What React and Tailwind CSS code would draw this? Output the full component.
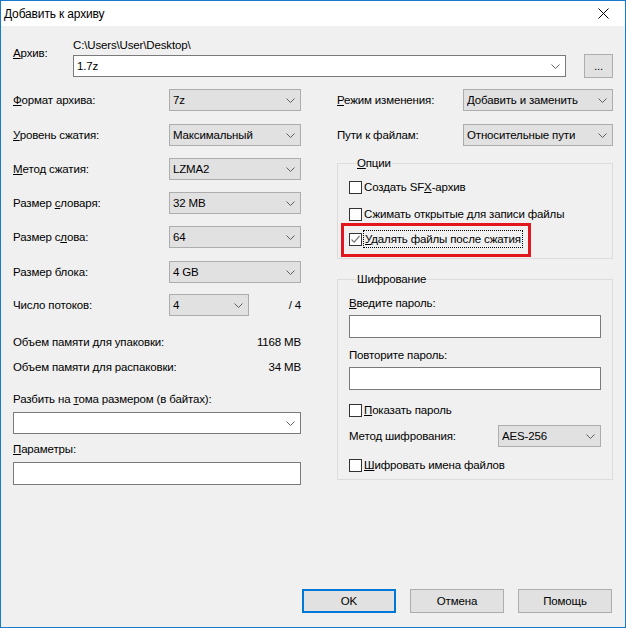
import React from 'react';

const Chevron = () => (
  <svg width="9" height="5" viewBox="0 0 9 5" className="shrink-0">
    <path d="M0.5 0.5 L4.5 4.5 L8.5 0.5" fill="none" stroke="#5f5f5f" strokeWidth="1" />
  </svg>
);

const Combo = ({ value = '', white = false, className = '' }) => (
  <div
    className={`flex items-center h-[22px] border pl-[3px] pr-[5px] ${
      white ? 'bg-white border-[#7a7a7a]' : 'bg-[#e1e1e1] border-[#adadad]'
    } ${className}`}
  >
    <span className="flex-1 whitespace-nowrap overflow-hidden">{value}</span>
    <Chevron />
  </div>
);

const Input = () => <div className="h-[23px] bg-white border border-[#7a7a7a]" />;

const Check = ({ checked = false, children }) => (
  <div className="flex items-center h-[14px]">
    <span className="w-[13px] h-[13px] shrink-0 border border-[#333333] bg-white flex items-center justify-center">
      {checked && (
        <svg width="11" height="11" viewBox="0 0 11 11">
          <path d="M1.5 5.5 L4.2 8.2 L9.5 2" fill="none" stroke="#777777" strokeWidth="1.2" />
        </svg>
      )}
    </span>
    <span className="ml-[2px] whitespace-nowrap">{children}</span>
  </div>
);

const Group = ({ title, className = '', children }) => (
  <fieldset className={`border border-[#dcdcdc] pl-[11px] pr-[11px] ${className}`}>
    <legend className="ml-[7px] px-[1px] leading-[14px]">{title}</legend>
    {children}
  </fieldset>
);

// левая колонка: подпись + комбобокс
const leftRows = [
  { label: <><u>Ф</u>ормат архива:</>, value: '7z', mt: 'mt-0' },
  { label: <><u>У</u>ровень сжатия:</>, value: 'Максимальный', mt: 'mt-[13px]' },
  { label: <><u>М</u>етод сжатия:</>, value: 'LZMA2', mt: 'mt-[12px]' },
  { label: <>Размер <u>с</u>ловаря:</>, value: '32 MB', mt: 'mt-[12px]' },
  { label: <>Размер с<u>л</u>ова:</>, value: '64', mt: 'mt-[12px]' },
  { label: <>Размер блока:</>, value: '4 GB', mt: 'mt-[13px]' },
];

const Button = ({ children, primary = false }) => (
  <button
    className={`w-[94px] h-[24px] bg-[#e1e1e1] flex items-center justify-center ${
      primary ? 'border-2 border-[#0078d7]' : 'border border-[#adadad]'
    }`}
  >
    {children}
  </button>
);

export default function App() {
  return (
    <div
      className="w-[626px] h-[628px] border border-[#1979ca] bg-[#f0f0f0] flex flex-col text-[11.5px] tracking-[-0.15px] leading-[14px] text-black"
      style={{ fontFamily: '"Liberation Sans", Arial, sans-serif' }}
    >
      {/* заголовок окна */}
      <div className="h-[25px] bg-white flex items-center pl-[3px] shrink-0">
        <span className="flex-1 text-[12px]">Добавить к архиву</span>
        <div className="w-[46px] h-[25px] flex items-center justify-center mr-[-1px]">
          <svg width="11" height="11" viewBox="0 0 11 11">
            <path d="M0.5 0.5 L10.5 10.5 M10.5 0.5 L0.5 10.5" stroke="#000" strokeWidth="1" />
          </svg>
        </div>
      </div>

      <div className="flex-1 flex flex-col pl-[12px] pr-[11px]">
        {/* архив */}
        <div className="flex mt-[12px]">
          <div className="w-[60px] pt-[8px]">
            <u>А</u>рхив:
          </div>
          <div className="flex-1">
            <div>C:\Users\User\Desktop\</div>
            <div className="flex items-center mt-[2px] h-[24px]">
              <Combo white value="1.7z" className="w-[493px]" />
              <div className="flex-1" />
              <button className="w-[29px] h-[24px] mr-[1px] bg-[#e1e1e1] border border-[#adadad] flex items-center justify-center">
                ...
              </button>
            </div>
          </div>
        </div>

        <div className="flex items-start mt-[11px]">
          {/* левая колонка */}
          <div className="w-[288px] flex flex-col">
            {leftRows.map((r, i) => (
              <div key={i} className={`flex items-center ${r.mt}`}>
                <div className="w-[156px]">{r.label}</div>
                <Combo value={r.value} className="w-[132px]" />
              </div>
            ))}
            <div className="flex items-center mt-[11px]">
              <div className="w-[156px]">Число потоков:</div>
              <Combo value="4" className="w-[80px]" />
              <div className="flex-1 text-right">/ 4</div>
            </div>

            <div className="flex mt-[19px]">
              <div className="flex-1">Объем памяти для упаковки:</div>
              <div>1168 MB</div>
            </div>
            <div className="flex mt-[11px]">
              <div className="flex-1">Объем памяти для распаковки:</div>
              <div>34 MB</div>
            </div>

            <div className="mt-[18px]">
              Разбить на <u>т</u>ома размером (в байтах):
            </div>
            <Combo white className="mt-[6px]" />
            <div className="mt-[8px]">
              <u>П</u>араметры:
            </div>
            <div className="mt-[6px]">
              <Input />
            </div>
          </div>

          <div className="w-[36px]" />

          {/* правая колонка */}
          <div className="w-[276px] flex flex-col">
            <div className="flex items-center">
              <div className="w-[126px]">
                <u>Р</u>ежим изменения:
              </div>
              <Combo value="Добавить и заменить" className="w-[150px]" />
            </div>
            <div className="flex items-center mt-[13px]">
              <div className="w-[126px]">Пути к файлам:</div>
              <Combo value="Относительные пути" className="w-[150px]" />
            </div>

            <Group title={<><u>О</u>пции</>} className="mt-[10px] pb-[12px]">
              <div className="mt-[10px]">
                <Check>
                  Создать SF<u>X</u>-архив
                </Check>
              </div>
              <div className="mt-[13px]">
                <Check>Сжимать открытые для записи файлы</Check>
              </div>
              <div className="mt-[11px] relative">
                <Check checked>
                  <span className="border border-dotted border-black px-[1px] py-[2px] ml-[-1px]">
                    <u>У</u>далять файлы после сжатия
                  </span>
                </Check>
                <div className="absolute left-[-8px] top-[-9px] w-[190px] h-[34px] border-[3px] border-[#e3161f]" />
              </div>
            </Group>

            <Group title="Шифрование" className="mt-[13px] pb-[7px]">
              <div className="mt-[10px]">
                <u>В</u>ведите пароль:
              </div>
              <div className="mt-[5px]">
                <Input />
              </div>
              <div className="mt-[10px]">Повторите пароль:</div>
              <div className="mt-[5px]">
                <Input />
              </div>
              <div className="mt-[13px]">
                <Check>
                  <u>П</u>оказать пароль
                </Check>
              </div>
              <div className="flex items-center mt-[8px]">
                <div className="flex-1">Метод шифрования:</div>
                <Combo value="AES-256" className="w-[103px]" />
              </div>
              <div className="mt-[11px]">
                <Check>
                  <u>Ш</u>ифровать имена файлов
                </Check>
              </div>
            </Group>
          </div>
        </div>

        {/* кнопки */}
        <div className="mt-auto flex justify-end gap-[14px] pb-[14px] pr-[2px]">
          <Button primary>OK</Button>
          <Button>Отмена</Button>
          <Button>Помощь</Button>
        </div>
      </div>
    </div>
  );
}
